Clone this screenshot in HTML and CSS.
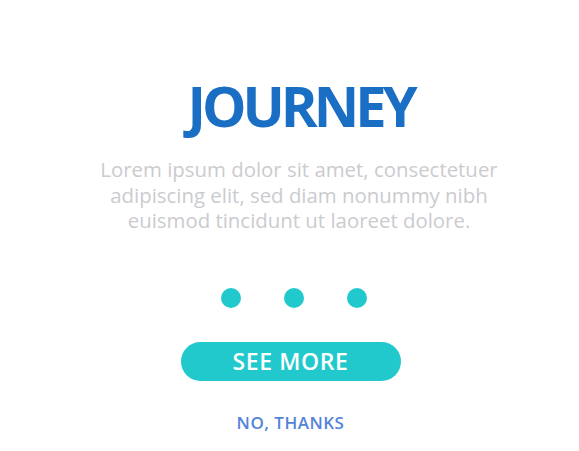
FILE: index.html
```html
<!DOCTYPE html>
<html>
<head>
<meta charset="utf-8">
<link rel="stylesheet" href="styles.css">
</head>
<body>
<main class="card">
  <h1 class="title">JOURNEY</h1>
  <p class="text">Lorem ipsum dolor sit amet, consectetuer<br>adipiscing elit, sed diam nonummy nibh<br>euismod tincidunt ut laoreet dolore.</p>
  <div class="dots"><span class="dot"></span><span class="dot"></span><span class="dot"></span></div>
  <button class="btn">SEE MORE</button>
  <a class="skip">NO, THANKS</a>
</main>
</body>
</html>
```
FILE: styles.css
```css
html, body { margin: 0; padding: 0; background: #fff; }
body { width: 579px; height: 451px; overflow: hidden; font-family: "Open Sans", "Liberation Sans", sans-serif; }
.card { display: flex; flex-direction: column; align-items: center; padding-top: 72px; padding-left: 8px; }
.title { margin: 0 0 0 14px; font-size: 56px; font-weight: 700; color: #1a6fc4; line-height: 66px; letter-spacing: -4px; }
.text { margin: 19px 0 0 11px; font-size: 20.4px; line-height: 25.5px; color: #cbcbcf; text-align: center; }
.dots { display: flex; gap: 43px; margin-top: 54px; }
.dot { width: 20px; height: 20px; border-radius: 50%; background: #22c9cc; }
.btn { margin: 34px 6px 0 0; width: 220px; height: 39px; border: none; border-radius: 20px; background: #22c9cc; color: #fff; font-family: inherit; font-size: 23px; font-weight: 600; letter-spacing: 0.6px; padding: 0; }
.skip { margin: 30px 6px 0 0; font-size: 17px; font-weight: 600; color: #5484d6; letter-spacing: 0.5px; }
```
